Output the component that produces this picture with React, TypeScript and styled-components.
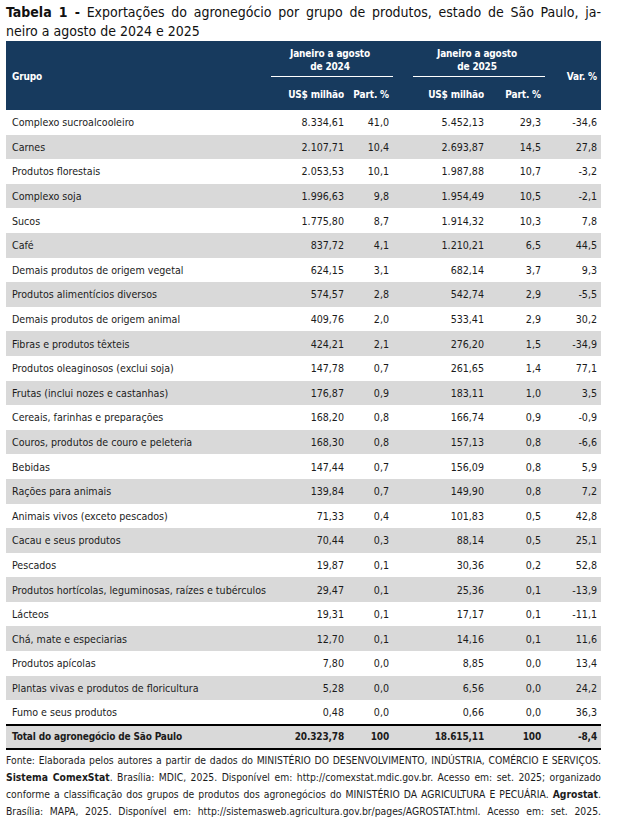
import styled, { createGlobalStyle } from 'styled-components';

const GlobalStyle = createGlobalStyle`
  html, body {
    margin: 0;
    padding: 0;
    background: #ffffff;
  }
  body {
    font-family: "DejaVu Sans Condensed", "DejaVu Sans", sans-serif;
    font-stretch: condensed;
    color: #1b1b1b;
  }
`;

const Page = styled.div`
  width: 595px;
  padding: 3px 6px 0 6px;
`;

const Title = styled.div`
  font-size: 14px;
  line-height: 19px;
  color: #111;
`;

const TitleLine = styled.div<{ $justify?: boolean }>`
  text-align: ${({ $justify }) => ($justify ? 'justify' : 'left')};
  text-align-last: ${({ $justify }) => ($justify ? 'justify' : 'left')};
`;

const Strong = styled.b`
  font-weight: bold;
`;

const Table = styled.table`
  width: 595px;
  table-layout: fixed;
  border-collapse: collapse;
  border-spacing: 0;
  font-size: 10.6px;
`;

const HeadRow = styled.tr<{ $height: number }>`
  height: ${({ $height }) => $height}px;
  background: #173a5e;
`;

const HeadCell = styled.th<{ $align?: 'left' | 'center' | 'right'; $rule?: boolean }>`
  color: #ffffff;
  font-weight: bold;
  font-size: 10px;
  letter-spacing: -0.15px;
  line-height: 13px;
  padding: ${({ $align }) => ($align === 'left' ? '0 0 0 6px' : '0 4px 0 0')};
  padding-top: ${({ $rule }) => ($rule ? '4px' : '2px')};
  text-align: ${({ $align }) => $align ?? 'right'};
  vertical-align: middle;
  border-bottom: ${({ $rule }) => ($rule ? '1px solid #ffffff' : 'none')};
`;

const BodyRow = styled.tr<{ $shade: boolean }>`
  height: 24.6px;
  background: ${({ $shade }) => ($shade ? '#d9d9d9' : '#ffffff')};
`;

const TotalRow = styled.tr`
  height: 24px;
  background: #d9d9d9;
  border-top: 2px solid #000;
  border-bottom: 2px solid #000;
  font-weight: bold;
  font-size: 10px;
  letter-spacing: -0.15px;
`;

const NameCell = styled.td`
  padding: 0 0 0 6px;
  text-align: left;
  white-space: nowrap;
`;

const NumCell = styled.td`
  padding: 0 4px 0 0;
  text-align: right;
  white-space: nowrap;
`;

const Note = styled.div`
  font-size: 10.3px;
  line-height: 17px;
  padding-top: 2px;
  color: #1b1b1b;
`;

const NoteLine = styled.div`
  text-align: justify;
  text-align-last: justify;
`;

type Row = [string, string, string, string, string, string];

const rows: Row[] = [
  ['Complexo sucroalcooleiro', '8.334,61', '41,0', '5.452,13', '29,3', '-34,6'],
  ['Carnes', '2.107,71', '10,4', '2.693,87', '14,5', '27,8'],
  ['Produtos florestais', '2.053,53', '10,1', '1.987,88', '10,7', '-3,2'],
  ['Complexo soja', '1.996,63', '9,8', '1.954,49', '10,5', '-2,1'],
  ['Sucos', '1.775,80', '8,7', '1.914,32', '10,3', '7,8'],
  ['Café', '837,72', '4,1', '1.210,21', '6,5', '44,5'],
  ['Demais produtos de origem vegetal', '624,15', '3,1', '682,14', '3,7', '9,3'],
  ['Produtos alimentícios diversos', '574,57', '2,8', '542,74', '2,9', '-5,5'],
  ['Demais produtos de origem animal', '409,76', '2,0', '533,41', '2,9', '30,2'],
  ['Fibras e produtos têxteis', '424,21', '2,1', '276,20', '1,5', '-34,9'],
  ['Produtos oleaginosos (exclui soja)', '147,78', '0,7', '261,65', '1,4', '77,1'],
  ['Frutas (inclui nozes e castanhas)', '176,87', '0,9', '183,11', '1,0', '3,5'],
  ['Cereais, farinhas e preparações', '168,20', '0,8', '166,74', '0,9', '-0,9'],
  ['Couros, produtos de couro e peleteria', '168,30', '0,8', '157,13', '0,8', '-6,6'],
  ['Bebidas', '147,44', '0,7', '156,09', '0,8', '5,9'],
  ['Rações para animais', '139,84', '0,7', '149,90', '0,8', '7,2'],
  ['Animais vivos (exceto pescados)', '71,33', '0,4', '101,83', '0,5', '42,8'],
  ['Cacau e seus produtos', '70,44', '0,3', '88,14', '0,5', '25,1'],
  ['Pescados', '19,87', '0,1', '30,36', '0,2', '52,8'],
  ['Produtos hortícolas, leguminosas, raízes e tubérculos', '29,47', '0,1', '25,36', '0,1', '-13,9'],
  ['Lácteos', '19,31', '0,1', '17,17', '0,1', '-11,1'],
  ['Chá, mate e especiarias', '12,70', '0,1', '14,16', '0,1', '11,6'],
  ['Produtos apícolas', '7,80', '0,0', '8,85', '0,0', '13,4'],
  ['Plantas vivas e produtos de floricultura', '5,28', '0,0', '6,56', '0,0', '24,2'],
  ['Fumo e seus produtos', '0,48', '0,0', '0,66', '0,0', '36,3'],
];

const total: Row = ['Total do agronegócio de São Paulo', '20.323,78', '100', '18.615,11', '100', '-8,4'];

function DataRow({ row, shade }: { row: Row; shade: boolean }) {
  return (
    <BodyRow $shade={shade}>
      <NameCell>{row[0]}</NameCell>
      <NumCell>{row[1]}</NumCell>
      <NumCell>{row[2]}</NumCell>
      <td />
      <NumCell>{row[3]}</NumCell>
      <NumCell>{row[4]}</NumCell>
      <NumCell>{row[5]}</NumCell>
    </BodyRow>
  );
}

export default function App() {
  return (
    <Page>
      <GlobalStyle />
      <Title>
        <TitleLine $justify>
          <Strong>Tabela 1 -</Strong> Exportações do agronegócio por grupo de produtos, estado de São Paulo, ja-
        </TitleLine>
        <TitleLine>neiro a agosto de 2024 e 2025</TitleLine>
      </Title>

      <Table>
        <colgroup>
          <col style={{ width: 265 }} />
          <col style={{ width: 77 }} />
          <col style={{ width: 45 }} />
          <col style={{ width: 20 }} />
          <col style={{ width: 75 }} />
          <col style={{ width: 57 }} />
          <col style={{ width: 56 }} />
        </colgroup>
        <thead>
          <HeadRow $height={35}>
            <HeadCell $align="left" rowSpan={2}>Grupo</HeadCell>
            <HeadCell $align="center" colSpan={2} $rule>
              Janeiro a agosto
              <br />
              de 2024
            </HeadCell>
            <HeadCell rowSpan={2} />
            <HeadCell $align="center" colSpan={2} $rule>
              Janeiro a agosto
              <br />
              de 2025
            </HeadCell>
            <HeadCell rowSpan={2}>Var. %</HeadCell>
          </HeadRow>
          <HeadRow $height={34}>
            <HeadCell>US$ milhão</HeadCell>
            <HeadCell>Part. %</HeadCell>
            <HeadCell>US$ milhão</HeadCell>
            <HeadCell>Part. %</HeadCell>
          </HeadRow>
        </thead>
        <tbody>
          {rows.map((row, i) => (
            <DataRow key={row[0]} row={row} shade={i % 2 === 1} />
          ))}
          <TotalRow>
            <NameCell>{total[0]}</NameCell>
            <NumCell>{total[1]}</NumCell>
            <NumCell>{total[2]}</NumCell>
            <td />
            <NumCell>{total[3]}</NumCell>
            <NumCell>{total[4]}</NumCell>
            <NumCell>{total[5]}</NumCell>
          </TotalRow>
        </tbody>
      </Table>

      <Note>
        <NoteLine>
          Fonte: Elaborada pelos autores a partir de dados do MINISTÉRIO DO DESENVOLVIMENTO, INDÚSTRIA, COMÉRCIO E SERVIÇOS.
        </NoteLine>
        <NoteLine>
          <Strong>Sistema ComexStat</Strong>. Brasília: MDIC, 2025. Disponível em: http://comexstat.mdic.gov.br. Acesso em: set. 2025; organizado
        </NoteLine>
        <NoteLine>
          conforme a classificação dos grupos de produtos dos agronegócios do MINISTÉRIO DA AGRICULTURA E PECUÁRIA. <Strong>Agrostat</Strong>.
        </NoteLine>
        <NoteLine>
          Brasília: MAPA, 2025. Disponível em: http://sistemasweb.agricultura.gov.br/pages/AGROSTAT.html. Acesso em: set. 2025.
        </NoteLine>
      </Note>
    </Page>
  );
}
